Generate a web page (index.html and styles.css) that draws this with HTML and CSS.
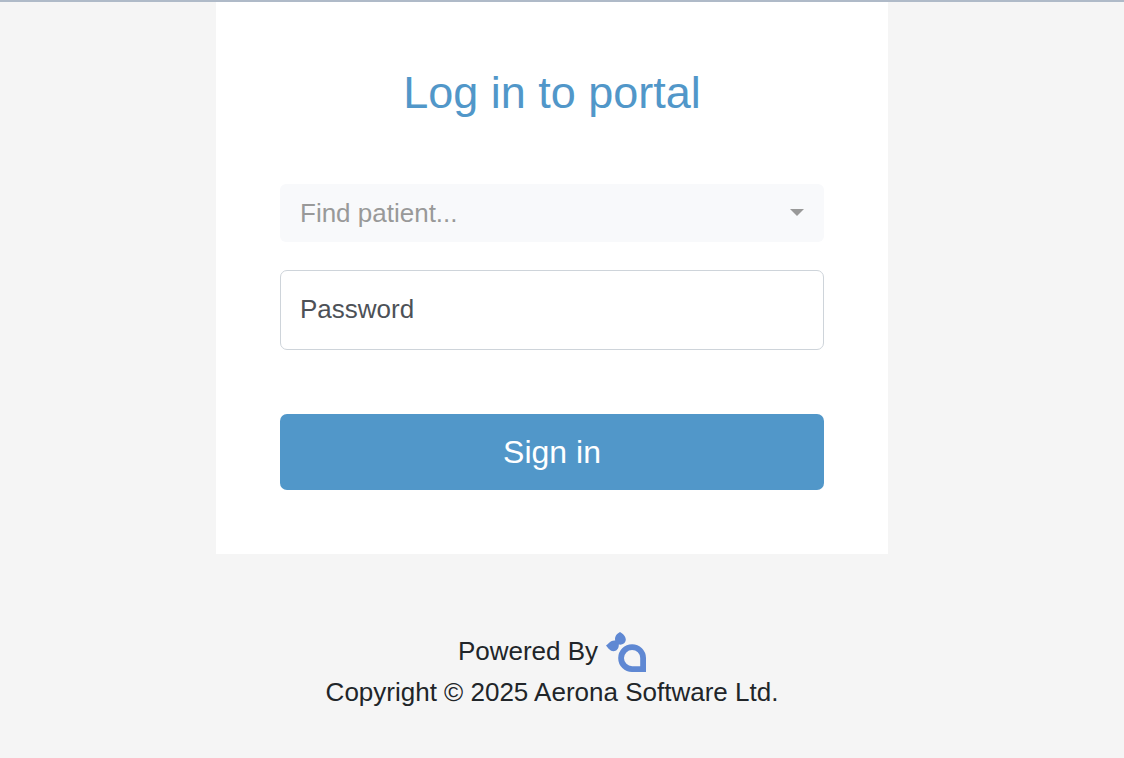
FILE: index.html
```html
<!DOCTYPE html>
<html lang="en">
<head>
<meta charset="utf-8">
<meta name="viewport" content="width=device-width, initial-scale=1">
<title>Log in to portal</title>
<link rel="stylesheet" href="styles.css">
</head>
<body>
<main class="card">
  <h1 class="title">Log in to portal</h1>
  <form class="form">
    <div class="select-wrap">
      <select class="select" id="patient" aria-label="Patient">
        <option>Find patient...</option>
      </select>
    </div>
    <div class="field">
      <input class="input" id="password" type="password" placeholder=" ">
      <label class="field-label" for="password">Password</label>
    </div>
    <button class="button" type="submit">Sign in</button>
  </form>
</main>
<footer class="footer">
  <div class="powered">
    <span>Powered By</span>
    <svg class="logo" viewBox="0 0 40 40" aria-hidden="true">
      <path fill="#5f88d3" d="M14 0C17 1.500 19.800 4.500 19.800 7.500C19.800 11 16.500 13.200 12.800 12.500C13 16.500 10.500 19.200 7.500 19.200C4 19.200 2.200 16 0 13.500C3 11.500 5 8 9.200 8.600C8.300 4.500 11 1.500 14 0Z"/>
      <path fill="none" stroke="#5f88d3" stroke-width="5.800" d="M37.100 37.100H26.200A11 11 0 1 1 37.100 26.100Z"/>
    </svg>
  </div>
  <div class="copyright">Copyright © 2025 Aerona Software Ltd.</div>
</footer>
</body>
</html>
```
FILE: styles.css
```css
*,
*::before,
*::after {
  box-sizing: border-box;
}

body {
  margin: 0;
  min-height: 100vh;
  padding-right: 20px;
  border-top: 2px solid #afbac8;
  background: #f5f5f5;
  color: #212529;
  font: 26px/40px "Liberation Sans", Arial, sans-serif;
}

.card {
  max-width: 672px;
  margin: 0 auto;
  padding: 64px;
  background: #fff;
}

.title {
  margin: 0 0 64px;
  color: #5197c9;
  font-size: 45px;
  font-weight: 400;
  line-height: 54px;
  text-align: center;
}

.form {
  display: flex;
  flex-direction: column;
}

.select-wrap {
  position: relative;
  margin-bottom: 28px;
}

.select-wrap::after {
  content: "";
  position: absolute;
  top: 25px;
  right: 20px;
  border: 7px solid transparent;
  border-top-color: #999;
  border-bottom: 0;
  pointer-events: none;
}

.select {
  display: block;
  width: 100%;
  height: 58px;
  padding: 0 20px;
  border: 0;
  border-radius: 6px;
  appearance: none;
  background: #f8f9fb;
  color: #999;
  font: inherit;
}

.field {
  position: relative;
  margin-bottom: 64px;
}

/* The label lies over the empty box and gives way to typed text. */
.field-label {
  position: absolute;
  top: 19px;
  left: 20px;
  color: #4d5157;
  pointer-events: none;
}

.input:not(:placeholder-shown) + .field-label {
  opacity: 0;
}

.input {
  display: block;
  width: 100%;
  height: 80px;
  padding: 0 19px;
  border: 1px solid #ced4da;
  border-radius: 7px;
  background: #fff;
  color: #212529;
  font: inherit;
}

.button {
  height: 76px;
  border: 0;
  border-radius: 7px;
  background: #5197c9;
  color: #fff;
  font: inherit;
  font-size: 32px;
  cursor: pointer;
}

.footer {
  padding: 75px 16px 40px;
  text-align: center;
}

.powered {
  display: flex;
  justify-content: center;
  align-items: center;
  gap: 8px;
}

.logo {
  width: 40px;
  height: 40px;
  margin-top: 3px;
}
```
